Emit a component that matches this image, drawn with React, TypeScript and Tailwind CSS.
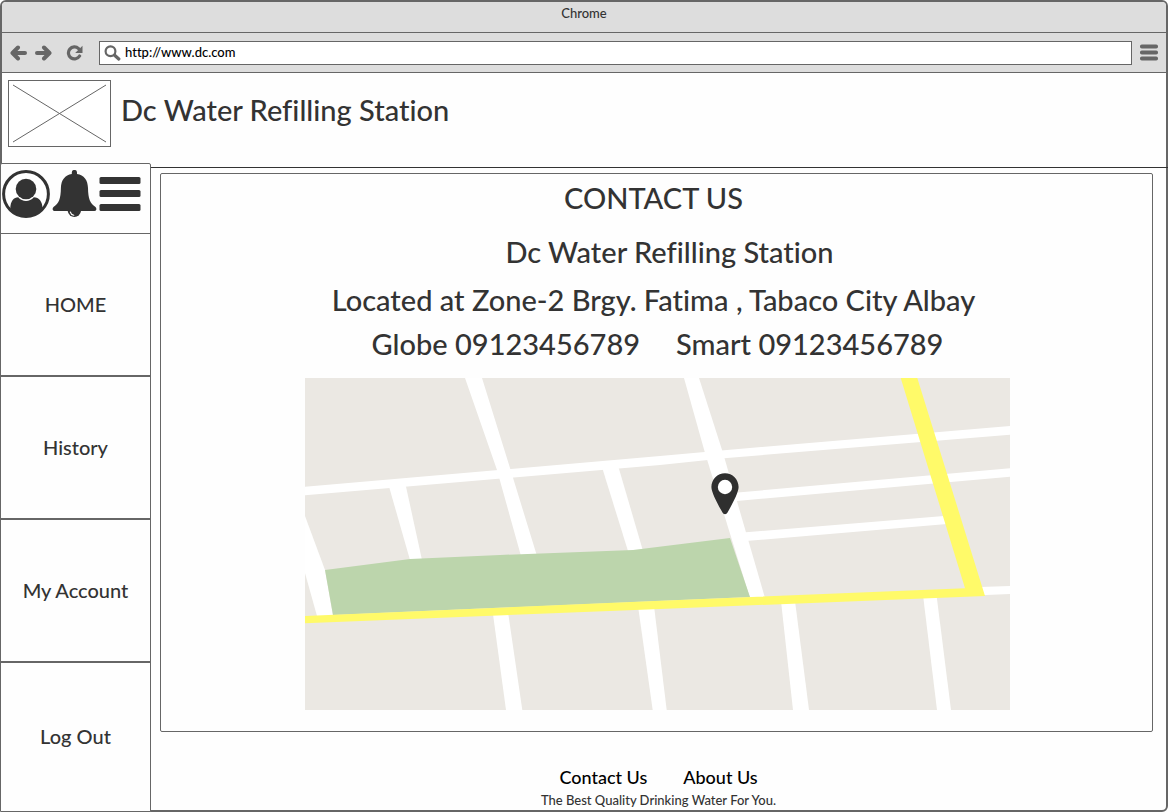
import React from "react";

const navItems = ["HOME", "History", "My Account", "Log Out"];

function ArrowIcon({ flipped = false }: { flipped?: boolean }) {
  return (
    <svg width="17" height="16" viewBox="0 0 17 16" fill="none" stroke="#666" strokeWidth="4" strokeLinecap="round" strokeLinejoin="round">
      {flipped ? <path d="M2 8H14M9 2.5L14.5 8L9 13.5" /> : <path d="M15 8H3M8 2.5L2.5 8L8 13.5" />}
    </svg>
  );
}

function ReloadIcon() {
  return (
    <svg width="17" height="16" viewBox="0 0 17 16">
      <path d="M12.6 3.6A6 6 0 1 0 13.6 11" fill="none" stroke="#666" strokeWidth="3.2" strokeLinecap="round" />
      <path d="M16.5 0.8V8H9.2Z" fill="#666" />
    </svg>
  );
}

function SearchIcon() {
  return (
    <svg width="17" height="16" viewBox="0 0 17 16" fill="none" stroke="#666" strokeLinecap="round">
      <circle cx="6.5" cy="6.3" r="4.9" strokeWidth="2.2" />
      <path d="M10.6 10.2L14.8 14" strokeWidth="3.2" />
    </svg>
  );
}

function UserIcon() {
  return (
    <svg width="48" height="48" viewBox="0 0 48 48">
      <circle cx="24" cy="24" r="22.4" fill="#fff" stroke="#333" strokeWidth="3" />
      <path d="M8.3 38.5C8.3 31 12 27.2 16.2 27.2C20.5 32.2 27.5 32.2 31.8 27.2C37 27.2 40.5 31.5 40.5 38.5C31 49 17 49 8.3 38.5Z" fill="#333" />
      <circle cx="24" cy="19" r="10.3" fill="#333" />
    </svg>
  );
}

function BellIcon() {
  return (
    <svg width="45" height="48" viewBox="0 0 45 48">
      <path d="M19.8 4V2.5A2.6 2.6 0 0 1 25 2.5V4C32 5 35.8 10 36 18C36.2 29 38 33 43.5 37C45 38.5 44.5 41 42.5 41H2.5C0.5 41 0 38.5 1.5 37C7 33 8.7 29 8.9 18C9.1 10 13 5 19.8 4Z" fill="#333" />
      <path d="M15.7 41A6.7 6.7 0 0 0 29 41Z" fill="#333" />
      <path d="M18.3 42A4.5 4.5 0 0 0 21.8 45.3" fill="none" stroke="#fff" strokeWidth="1.1" strokeLinecap="round" />
    </svg>
  );
}

function MenuIcon() {
  return (
    <svg width="42" height="48" viewBox="0 0 42 48" fill="#333">
      <rect x="0.5" y="7" width="41" height="7" rx="1.5" />
      <rect x="0.5" y="20" width="41" height="7" rx="1.5" />
      <rect x="0.5" y="34" width="41" height="7" rx="1.5" />
    </svg>
  );
}

function StreetMap() {
  return (
    <svg className="h-auto w-full max-w-[705px]" viewBox="0 0 705 332" role="img" aria-label="Street map">
      <rect width="705" height="332" fill="#ebe8e3" />
      <g fill="#fff">
        <path d="M0 108.7L355 78L422 72L705 48V56.7L422 80L355 87L0 117.3Z" />
        <path d="M160 0H177L205 90L232 178H216L192 92Z" />
        <path d="M83 105L100 104L117 182H105Z" />
        <path d="M296 86L312 84L338 173H323Z" />
        <path d="M0 138L20 192L28 238H12L0 195Z" />
        <path d="M379 0H394L418 75L460 220H445L400 75Z" />
        <path d="M421 115.5L705 90.3V98.7L421 124Z" />
        <path d="M438 154.5L642 137.7V146L438 163.3Z" />
        <path d="M675 209L705 208V216L675 217.3Z" />
        <path d="M187.7 234H203L217.3 332H201Z" />
        <path d="M333 228H349L361.7 332H347.7Z" />
        <path d="M476 223H490L504 332H488Z" />
        <path d="M618 217H631.5L646 332H632Z" />
      </g>
      <path d="M20 192L105 181L195 177L328 172L425 160L445 219L28 237Z" fill="#bcd5ac" />
      <path d="M0 238L355 222.7L660 210.3L595.7 0H612.3L680 218L355 231L0 245.3Z" fill="#fffa69" />
      <path d="M420 95.2C412.5 95.2 406.4 101.3 406.4 109C406.4 114 412 125 417.5 134.5C418.7 136.8 421.3 136.8 422.5 134.5C428 125 433.6 114 433.6 109C433.6 101.3 427.5 95.2 420 95.2Z" fill="#2f2f2f" />
      <circle cx="420" cy="109" r="7.2" fill="#fff" />
    </svg>
  );
}

export default function App() {
  return (
    <div className="flex min-h-screen flex-col rounded-md border-2 border-[#666] bg-[#fefefe] font-['Lato','Noto_Sans',sans-serif] font-medium text-[#333] [font-variant-ligatures:none]">
      <div className="flex h-[31px] items-start justify-center rounded-t border-b border-[#666] bg-[#ddd] text-[13px] leading-[22px]">
        Chrome
      </div>
      <div className="flex h-10 items-center border-b border-[#666] bg-[#ddd] pr-2 pl-2">
        <button aria-label="Back"><ArrowIcon /></button>
        <button aria-label="Forward" className="ml-2"><ArrowIcon flipped /></button>
        <button aria-label="Reload" className="ml-3.5"><ReloadIcon /></button>
        <label className="ml-4 flex h-6 flex-1 items-center gap-1 border border-[#666] bg-white pl-1">
          <SearchIcon />
          <input aria-label="Address" defaultValue="http://www.dc.com" className="min-w-0 flex-1 bg-transparent text-[13px] text-black outline-none" />
        </label>
        <button aria-label="Browser menu" className="ml-2">
          <svg width="18" height="17" viewBox="0 0 18 17" fill="#666">
            <rect y="0.5" width="18" height="4" rx="1.8" />
            <rect y="6.5" width="18" height="4" rx="1.8" />
            <rect y="12.5" width="18" height="4" rx="1.8" />
          </svg>
        </button>
      </div>

      <header className="-mr-0.5 flex h-[95px] items-start gap-2.5 border-b border-[#333] pt-[7px] pl-1.5">
        <svg width="103" height="67" viewBox="0 0 103 67" fill="none" stroke="#666" role="img" aria-label="Logo">
          <rect x="0.5" y="0.5" width="102" height="66" fill="#fff" />
          <path d="M5 5L98 62M98 5L5 62" />
        </svg>
        <h1 className="pt-2.5 text-[29px] leading-10">Dc Water Refilling Station</h1>
      </header>

      <div className="flex flex-1">
        <aside className="relative -mt-[5px] -mb-0.5 -ml-0.5 flex w-[151px] shrink-0 flex-col rounded-t-xs border border-[#666] bg-[#fefefe]">
          <div className="flex h-[70px] items-start gap-0.5 border-b border-[#666] pt-1.5 pl-px">
            <button aria-label="Profile" className="shrink-0"><UserIcon /></button>
            <button aria-label="Notifications" className="shrink-0"><BellIcon /></button>
            <button aria-label="Menu" className="shrink-0"><MenuIcon /></button>
          </div>
          <nav className="flex flex-1 flex-col">
            {navItems.map((item) => (
              <a key={item} href="#" className="flex min-h-[143px] items-center justify-center border-b-2 border-[#666] pb-0.5 text-[20px] last:flex-1 last:border-b-0">
                {item}
              </a>
            ))}
          </nav>
        </aside>

        <div className="flex min-w-0 flex-1 flex-col">
          <main className="mt-[5px] mr-[13px] ml-[9px] flex flex-1 flex-col items-center rounded-xs border border-[#666] pt-1 pb-5 pl-0.5 text-center text-[29px] leading-10">
            <h2 className="pr-2">CONTACT US</h2>
            <p className="mt-3.5 pl-6">Dc Water Refilling Station</p>
            <p className="mt-2 pr-2">Located at Zone-2 Brgy. Fatima , Tabaco City Albay</p>
            <p className="mt-1 mb-3.5 flex flex-wrap justify-center gap-x-9">
              <span>Globe 09123456789</span>
              <span>Smart 09123456789</span>
            </p>
            <StreetMap />
          </main>
          <footer className="flex h-[78px] flex-col items-center justify-end text-black">
            <div className="flex gap-9 text-[18px] leading-[26px]">
              <a href="#">Contact Us</a>
              <a href="#">About Us</a>
            </div>
            <p className="text-[13px] leading-5 text-[#333]">The Best Quality Drinking Water For You.</p>
          </footer>
        </div>
      </div>
    </div>
  );
}
